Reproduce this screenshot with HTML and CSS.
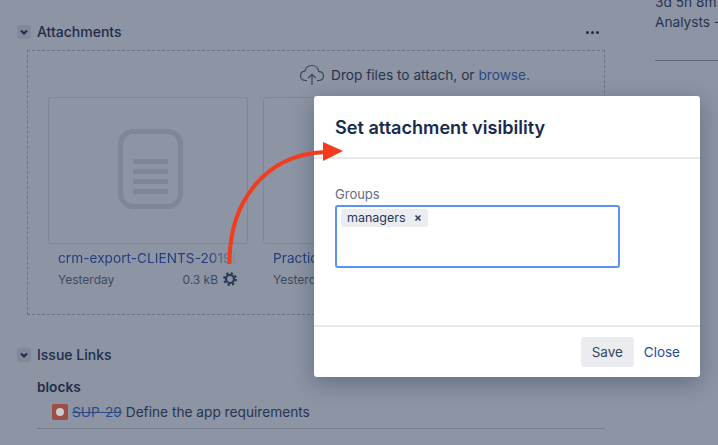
FILE: index.html
```html
<!DOCTYPE html>
<html lang="en">
<head>
<meta charset="utf-8">
<title>Set attachment visibility</title>
<link rel="stylesheet" href="styles.css">
</head>
<body>
<div class="page">
  <main class="main">
    <section class="attachments">
      <header class="section-head">
        <span class="toggle"><svg width="10" height="10" viewBox="0 0 10 10"><path d="M2 3.5 5 6.5 8 3.5" fill="none" stroke="#1f2d4d" stroke-width="2"/></svg></span>
        <h2 class="section-title">Attachments</h2>
        <span class="dots"><i></i><i></i><i></i></span>
      </header>
      <div class="dropzone">
        <div class="drop-line">
          <svg class="cloud" width="26" height="22" viewBox="0 0 26 22"><path d="M8 16.5H6.5C3.5 16.5 1.5 14.4 1.5 11.8 1.5 9.3 3.4 7.4 5.9 7.2 6.6 3.9 9.4 1.5 12.8 1.5 16.3 1.5 19.1 4 19.7 7.3 22.3 7.6 24.5 9.5 24.5 12.1 24.5 14.6 22.6 16.5 20 16.5H18" fill="none" stroke="#3c4660" stroke-width="1.2"/><path d="M13 21V10.5M9.3 14 13 10.3 16.7 14" fill="none" stroke="#3c4660" stroke-width="1.2"/></svg>
          <span>Drop files to attach, or <a class="link">browse.</a></span>
        </div>
        <div class="cards">
          <article class="card">
            <div class="thumb">
              <svg width="65" height="80" viewBox="0 0 65 80"><rect x="2.5" y="2.5" width="60" height="75" rx="13" fill="none" stroke="#7f8696" stroke-width="5"/><path d="M15 30h35v5H15zM15 40h35v5H15zM15 50h35v5H15zM15 60h35v5H15z" fill="#7f8696"/></svg>
            </div>
            <div class="file-name">crm-export-CLIENTS-2019(</div>
            <div class="file-meta">
              <span>Yesterday</span>
              <span class="meta-right">0.3 kB
                <svg class="gear" width="14" height="14" viewBox="0 0 14 14"><circle cx="7" cy="7" r="4" fill="none" stroke="#2b3956" stroke-width="2.2"/><circle cx="7" cy="7" r="5.8" fill="none" stroke="#2b3956" stroke-width="2.2" stroke-dasharray="2.3 2.25"/></svg>
              </span>
            </div>
          </article>
          <article class="card">
            <div class="thumb"></div>
            <div class="file-name">Practice-guide.pdf</div>
            <div class="file-meta"><span>Yesterday</span></div>
          </article>
        </div>
      </div>
    </section>
    <section class="links">
      <header class="section-head">
        <span class="toggle"><svg width="10" height="10" viewBox="0 0 10 10"><path d="M2 3.5 5 6.5 8 3.5" fill="none" stroke="#1f2d4d" stroke-width="2"/></svg></span>
        <h2 class="section-title">Issue Links</h2>
      </header>
      <h3 class="link-type">blocks</h3>
      <div class="link-row">
        <span class="issue-icon"><i></i></span>
        <a class="link struck">SUP-29</a>
        <span>Define the app requirements</span>
      </div>
    </section>
  </main>
  <aside class="side">
    <div>3d 5h 8m</div>
    <div>Analysts - Managers</div>
  </aside>
</div>

<div class="modal">
  <h1 class="modal-title">Set attachment visibility</h1>
  <div class="modal-body">
    <label class="field-label">Groups</label>
    <div class="multi-input">
      <span class="tag">managers <svg width="8" height="8" viewBox="0 0 8 8"><path d="M1.5 1.5l5 5M6.5 1.5l-5 5" stroke="#253858" stroke-width="1.5"/></svg></span>
    </div>
  </div>
  <footer class="modal-foot">
    <button class="save">Save</button>
    <a class="close">Close</a>
  </footer>
</div>

<svg class="arrow" width="718" height="445" viewBox="0 0 718 445">
  <path d="M229.5 264C229 205 262 155 325 152" fill="none" stroke="#f23c1d" stroke-width="4"/>
  <path d="M323 142 343 151 323 161z" fill="#f23c1d"/>
</svg>
</body>
</html>
```

FILE: styles.css
```css
* { box-sizing: border-box; }
html, body { margin: 0; height: 445px; overflow: hidden; }
body {
  background: #8d94a3;
  color: #1f2c4c;
  font-family: Inter, "Liberation Sans", sans-serif;
  font-size: 13px;
  position: relative;
}
.page { display: flex; height: 445px; overflow: hidden; }
.main { width: 588px; margin-left: 17px; padding-top: 25px; flex: none; }
.section-head { display: flex; align-items: center; height: 14px; }
.toggle {
  width: 14px; height: 14px; border-radius: 3px; background: #808899;
  display: flex; align-items: center; justify-content: center; margin-right: 6px;
}
.section-title { margin: 0; font-size: 14px; font-weight: 500; color: #1f2c4c; line-height: 14px; }
.dots { margin-left: auto; margin-right: 6px; display: flex; gap: 2px; }
.dots i { width: 3px; height: 3px; border-radius: 50%; background: #1f2c4c; }
.dropzone {
  margin: 11px 0 0 10px; height: 265px;
  border: 1px dashed #6c7384; padding: 0 20px;
  overflow: hidden;
}
.drop-line {
  display: flex; justify-content: flex-end; align-items: center; gap: 6px;
  height: 46px; padding-right: 54px; padding-top: 2px; font-size: 13.7px; color: #27344f;
}
.cloud { margin-top: -1px; }
.link { color: #2b4a85; }
.cards { display: flex; gap: 15px; }
.card { width: 200px; flex: none; }
.thumb {
  height: 147px; border: 1px solid #7f8696; border-radius: 3px;
  display: flex; align-items: center; justify-content: center; padding: 0 0 3px 5px;
}
.file-name {
  margin: 6px 10px 0; height: 16px; line-height: 16px; font-size: 13.7px; color: #243f7d; white-space: nowrap; overflow: hidden;
  -webkit-mask-image: linear-gradient(90deg, #000 84%, transparent 100%);
  mask-image: linear-gradient(90deg, #000 84%, transparent 100%);
}
.file-meta {
  margin: 5px 10px 0; display: flex; justify-content: space-between; align-items: center;
  height: 16px; font-size: 12px; color: #3f4a62;
}
.meta-right { display: flex; align-items: center; gap: 5px; margin-right: 1px; }
.gear { flex: none; margin-top: -1px; }
.links { margin-top: 33px; }
.link-type { margin: 17px 0 0 20px; font-size: 13.7px; line-height: 16px; font-weight: 600; color: #1f2c4c; }
.link-row {
  margin: 9px 0 0 20px; padding: 0 0 8px 15px; height: 25px;
  display: flex; align-items: center; gap: 4px; font-size: 13.7px; color: #27344f;
  border-bottom: 1px solid #747c8e;
}
.issue-icon {
  width: 16px; height: 16px; border-radius: 2px; background: #9c4f45;
  display: flex; align-items: center; justify-content: center; flex: none;
}
.issue-icon i { width: 8px; height: 8px; border-radius: 50%; background: #c9ccd3; }
.struck { text-decoration: line-through; }
.side {
  margin-left: 50px; width: 200px; flex: none; height: 69px; margin-top: -8px;
  font-size: 13.7px; line-height: 20px; color: #27344f; white-space: nowrap;
  border-bottom: 1px solid #5a6275;
  overflow: hidden;
}
.modal {
  position: absolute; left: 314px; top: 96px; width: 386px; height: 281px;
  background: #fff; border-radius: 3px;
  box-shadow: 0 6px 22px rgba(9,30,66,.32);
  display: flex; flex-direction: column;
}
.modal-title {
  margin: 0; height: 63px; padding: 20px 21px 0; border-bottom: 2px solid #e8e9ed;
  font-size: 18.1px; line-height: 23px; font-weight: 600; color: #172b4d;
}
.modal-body { flex: 1; padding: 27px 21px 0; border-bottom: 2px solid #e8e9ed; }
.field-label { display: block; font-size: 13px; line-height: 16px; color: #5e6c84; }
.multi-input {
  margin-top: 3px; width: 285px; height: 63px;
  border: 2px solid #5b93f3; border-radius: 3px; padding: 2px 4px;
}
.tag {
  display: flex; align-items: center; gap: 8px; height: 18px; padding: 0 5px 1px 6px;
  width: 87px; background: #ebecf0; border-radius: 3px; font-size: 12.5px; color: #253858;
}
.modal-foot {
  height: 50px; padding: 10px 20px 0 0;
  display: flex; justify-content: flex-end; align-items: flex-start; gap: 10px;
}
.save {
  width: 53px; height: 30px; border: 0; border-radius: 3px; background: #ebecf0;
  font: inherit; font-size: 13.5px; color: #344563;
}
.close { line-height: 30px; font-size: 13.5px; color: #1f4a9e; }
.arrow { position: absolute; left: 0; top: 0; pointer-events: none; }
```
